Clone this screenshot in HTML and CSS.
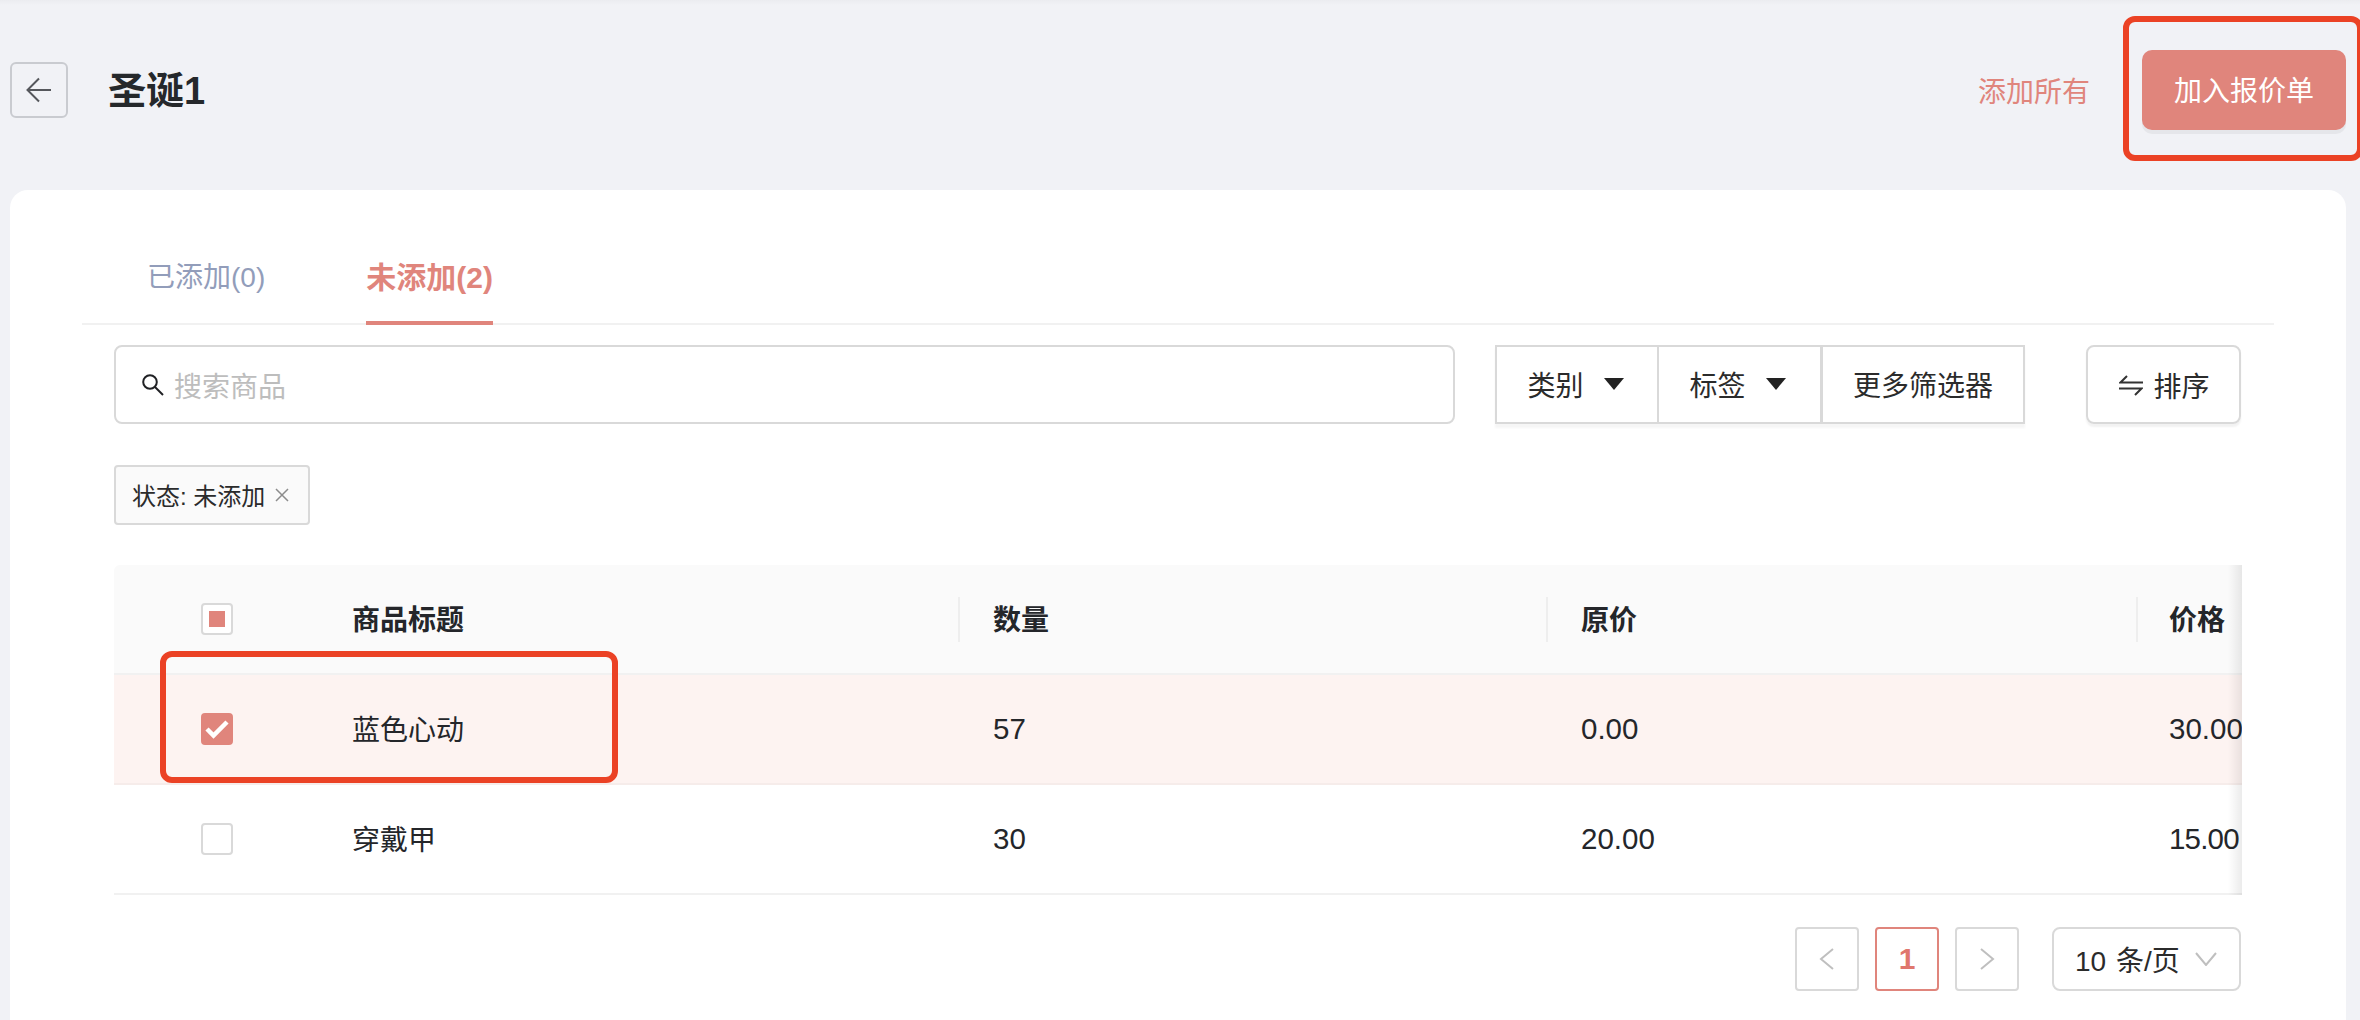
FILE: index.html
```html
<!DOCTYPE html>
<html lang="zh-CN">
<head>
<meta charset="utf-8">
<title>圣诞1</title>
<link rel="stylesheet" href="styles.css">
</head>
<body>
<header class="topbar">
  <div class="topbar-left">
    <button class="back-btn" type="button" aria-label="返回">
      <svg width="26" height="26" viewBox="0 0 26 26" fill="none" stroke="#55575c" stroke-width="2"><path d="M25 13H2M13 1.500 1.500 13 13 24.500"/></svg>
    </button>
    <h1 class="title">圣诞1</h1>
  </div>
  <div class="topbar-right">
    <a class="add-all">添加所有</a>
    <button class="primary-btn" type="button"><span class="btn-label">加入报价单</span></button>
  </div>
</header>

<main class="card">
  <nav class="tabs">
    <div class="tab">已添加(0)</div>
    <div class="tab tab-active">未添加(2)</div>
  </nav>

  <section class="content">
    <div class="toolbar">
      <div class="search">
        <svg width="22" height="22" viewBox="0 0 22 22" fill="none" stroke="#202124" stroke-width="2"><circle cx="8" cy="8" r="6.800"/><path d="m13 13 8 8"/></svg>
        <span class="placeholder">搜索商品</span>
      </div>
      <div class="filter-group">
        <div class="filter filter-a">类别<span class="caret"></span></div>
        <div class="filter filter-b">标签<span class="caret"></span></div>
        <div class="filter filter-c">更多筛选器</div>
      </div>
      <div class="sort">
        <svg width="24" height="22" viewBox="0 0 24 22" fill="none" stroke="#333" stroke-width="2"><path d="M24 8.500H1.500L8 2M0 14.500H22.500L16 21"/></svg>
        <span>排序</span>
      </div>
    </div>

    <div class="tag-row">
      <div class="tag"><span class="tag-label">状态: 未添加</span><svg width="14" height="14" viewBox="0 0 14 14" fill="none" stroke="#8c8c8c" stroke-width="1.500"><path d="m1 1 12 12M13 1 1 13"/></svg></div>
    </div>

    <div class="table">
      <div class="row row-head">
        <div class="cell cell-check"><span class="check check-partial"></span></div>
        <div class="cell cell-title">商品标题</div>
        <div class="cell cell-sep">数量</div>
        <div class="cell cell-sep">原价</div>
        <div class="cell cell-sep cell-last">价格</div>
      </div>
      <div class="row row-selected">
        <div class="cell cell-check"><span class="check check-on"><svg width="24" height="20" viewBox="0 0 24 20" fill="none" stroke="#fff" stroke-width="4.500"><path d="m2 10 6.500 6.500L22 3"/></svg></span></div>
        <div class="cell cell-title">蓝色心动</div>
        <div class="cell cell-num">57</div>
        <div class="cell cell-num">0.00</div>
        <div class="cell cell-num cell-last">30.00</div>
      </div>
      <div class="row">
        <div class="cell cell-check"><span class="check"></span></div>
        <div class="cell cell-title">穿戴甲</div>
        <div class="cell cell-num">30</div>
        <div class="cell cell-num">20.00</div>
        <div class="cell cell-num cell-last cell-tight">15.00</div>
      </div>
      <div class="table-shadow"></div>
    </div>

    <div class="pager">
      <div class="page-btn"><svg width="16" height="24" viewBox="0 0 16 24" fill="none" stroke="#bfbfbf" stroke-width="2"><path d="M14 2 2 12l12 10"/></svg></div>
      <div class="page-btn page-current">1</div>
      <div class="page-btn"><svg width="16" height="24" viewBox="0 0 16 24" fill="none" stroke="#bfbfbf" stroke-width="2"><path d="m2 2 12 10L2 22"/></svg></div>
      <div class="page-size"><span class="size-label">10 条/页</span><svg width="22" height="14" viewBox="0 0 22 14" fill="none" stroke="#bfbfbf" stroke-width="2"><path d="M1 1l10 12L21 1"/></svg></div>
    </div>
  </section>
</main>

<div class="mark mark-button"></div>
<div class="mark mark-row"></div>
</body>
</html>
```

FILE: styles.css
```css
* { box-sizing: border-box; }
html, body { margin: 0; height: 1020px; overflow: hidden; }
body {
  position: relative;
  background: linear-gradient(#ebecf0 0, #f1f2f6 5px);
  font-family: "Liberation Sans", "Noto Sans CJK SC", sans-serif;
  color: #202223;
  font-size: 28px;
}
button { font: inherit; padding: 0; cursor: pointer; }

.topbar {
  height: 190px;
  padding: 50px 14px 60px 10px;
  display: flex;
  justify-content: space-between;
  align-items: center;
}
.topbar-left { display: flex; align-items: center; gap: 40px; }
.back-btn {
  width: 58px;
  height: 56px;
  background: transparent;
  border: 2px solid #c9cbd0;
  border-radius: 6px;
  display: flex;
  align-items: center;
  justify-content: center;
}
.title { margin: 2px 0 0; font-size: 38px; line-height: 50px; font-weight: 700; color: #25282b; }
.topbar-right { display: flex; align-items: center; gap: 52px; }
.add-all { color: #e0857c; }
.primary-btn {
  width: 204px;
  height: 80px;
  color: #fff;
  background: #e0857c;
  border: 0;
  border-radius: 10px;
  box-shadow: 0 4px 0 #e5e6ea;
}
.btn-label { position: relative; top: -1px; }

.card {
  margin: 0 14px 0 10px;
  height: 830px;
  background: #fff;
  border-radius: 18px 18px 0 0;
  padding-top: 30px;
}
.tabs {
  margin: 0 72px;
  height: 105px;
  padding-left: 65px;
  display: flex;
  gap: 101px;
  border-bottom: 2px solid #f1f1f1;
}
.tab {
  height: 105px;
  padding-top: 38px;
  line-height: 40px;
  color: #929dba;
}
.tab-active {
  color: #e0857c;
  font-size: 30px;
  font-weight: 700;
  border-bottom: 4px solid #e0857c;
}

.content { margin: 0 105px 0 104px; padding-top: 20px; }
.toolbar { display: flex; height: 79px; }
.search {
  width: 1341px;
  border: 2px solid #d9d9d9;
  border-radius: 8px;
  display: flex;
  align-items: center;
  gap: 10px;
  padding-left: 26px;
}
.placeholder { color: #bdbdbd; }
.filter-group {
  margin-left: 40px;
  display: flex;
  border: 2px solid #d9d9d9;
  box-shadow: 0 4px 2px #f6f6f6;
}
.filter {
  display: flex;
  align-items: center;
  justify-content: center;
  border-left: 2px solid #d9d9d9;
  color: #2b2b2b;
  padding-bottom: 2px;
}
.filter:first-child { border-left: 0; }
.filter-a { width: 160px; gap: 20px; padding-right: 3px; }
.filter-b { width: 163px; gap: 20px; padding-right: 4px; }
.filter-c { width: 203px; border-left-width: 3px; }
.caret {
  width: 0;
  height: 0;
  border-left: 10px solid transparent;
  border-right: 10px solid transparent;
  border-top: 12px solid #222;
}
.sort {
  margin-left: 61px;
  width: 155px;
  border: 2px solid #d9d9d9;
  border-radius: 8px;
  box-shadow: 0 3px 2px #f2f2f2;
  display: flex;
  align-items: center;
  justify-content: center;
  gap: 10px;
  padding-left: 2px;
  color: #2b2b2b;
}

.tag-row { margin-top: 41px; display: flex; }
.tag {
  width: 196px;
  height: 60px;
  background: #fafafa;
  border: 2px solid #d9d9d9;
  border-radius: 4px;
  font-size: 24px;
  color: #2b2b2b;
  display: flex;
  align-items: center;
  gap: 10px;
  padding-left: 16px;
  white-space: nowrap;
}
.tag-label { position: relative; top: -1px; }

.table {
  position: relative;
  margin-top: 40px;
  width: 2128px;
  overflow: hidden;
}
.row {
  display: grid;
  grid-template-columns: 204px 640px 588px 590px 106px;
  height: 110px;
  border-bottom: 2px solid #f1f1f1;
}
.row-head { background: #fafafa; font-weight: 700; border-radius: 6px 0 0 0; }
.row-selected { background: #fdf3f1; border-bottom-color: #f6ecea; }
.cell {
  position: relative;
  display: flex;
  align-items: center;
  padding-left: 35px;
  white-space: nowrap;
  font-size: 28px;
  color: #24262a;
}
.cell-title { padding-left: 34px; padding-bottom: 2px; }
.cell-sep { padding-bottom: 2px; }
.cell-num { font-size: 29.500px; }
.cell-last { padding-left: 33px; }
.cell-tight { letter-spacing: -0.800px; }
.cell-check { padding: 0 0 0 87px; }
.cell-sep::before {
  content: "";
  position: absolute;
  left: 0;
  top: 32px;
  height: 45px;
  width: 2px;
  background: #eeeeee;
}
.check {
  width: 32px;
  height: 32px;
  border: 2px solid #d9d9d9;
  border-radius: 4px;
  background: #fff;
  display: flex;
  align-items: center;
  justify-content: center;
}
.check-partial::after {
  content: "";
  width: 16px;
  height: 16px;
  background: #e0857c;
}
.check-on { background: #e0857c; border-color: #e0857c; }
.table-shadow {
  position: absolute;
  top: 0;
  right: 0;
  bottom: 0;
  width: 14px;
  background: linear-gradient(to right, rgba(0,0,0,0), rgba(0,0,0,.08));
}

.pager {
  margin-top: 32px;
  display: flex;
  justify-content: flex-end;
  gap: 16px;
}
.page-btn {
  width: 64px;
  height: 64px;
  border: 2px solid #d9d9d9;
  border-radius: 4px;
  display: flex;
  align-items: center;
  justify-content: center;
}
.page-current { color: #e0776d; border-color: #e0857c; font-size: 30px; font-weight: 700; }
.page-size {
  margin-left: 17px;
  width: 189px;
  height: 64px;
  border: 2px solid #d9d9d9;
  border-radius: 8px;
  display: flex;
  align-items: center;
  gap: 15px;
  padding-left: 21px;
  color: #2b2b2b;
  white-space: nowrap;
}
.size-label { word-spacing: 2px; }

.mark {
  position: absolute;
  border: 6px solid #eb4225;
  border-radius: 12px;
  pointer-events: none;
}
.mark-button { left: 2123px; top: 16px; width: 240px; height: 145px; }
.mark-row { left: 160px; top: 651px; width: 458px; height: 132px; }
```
